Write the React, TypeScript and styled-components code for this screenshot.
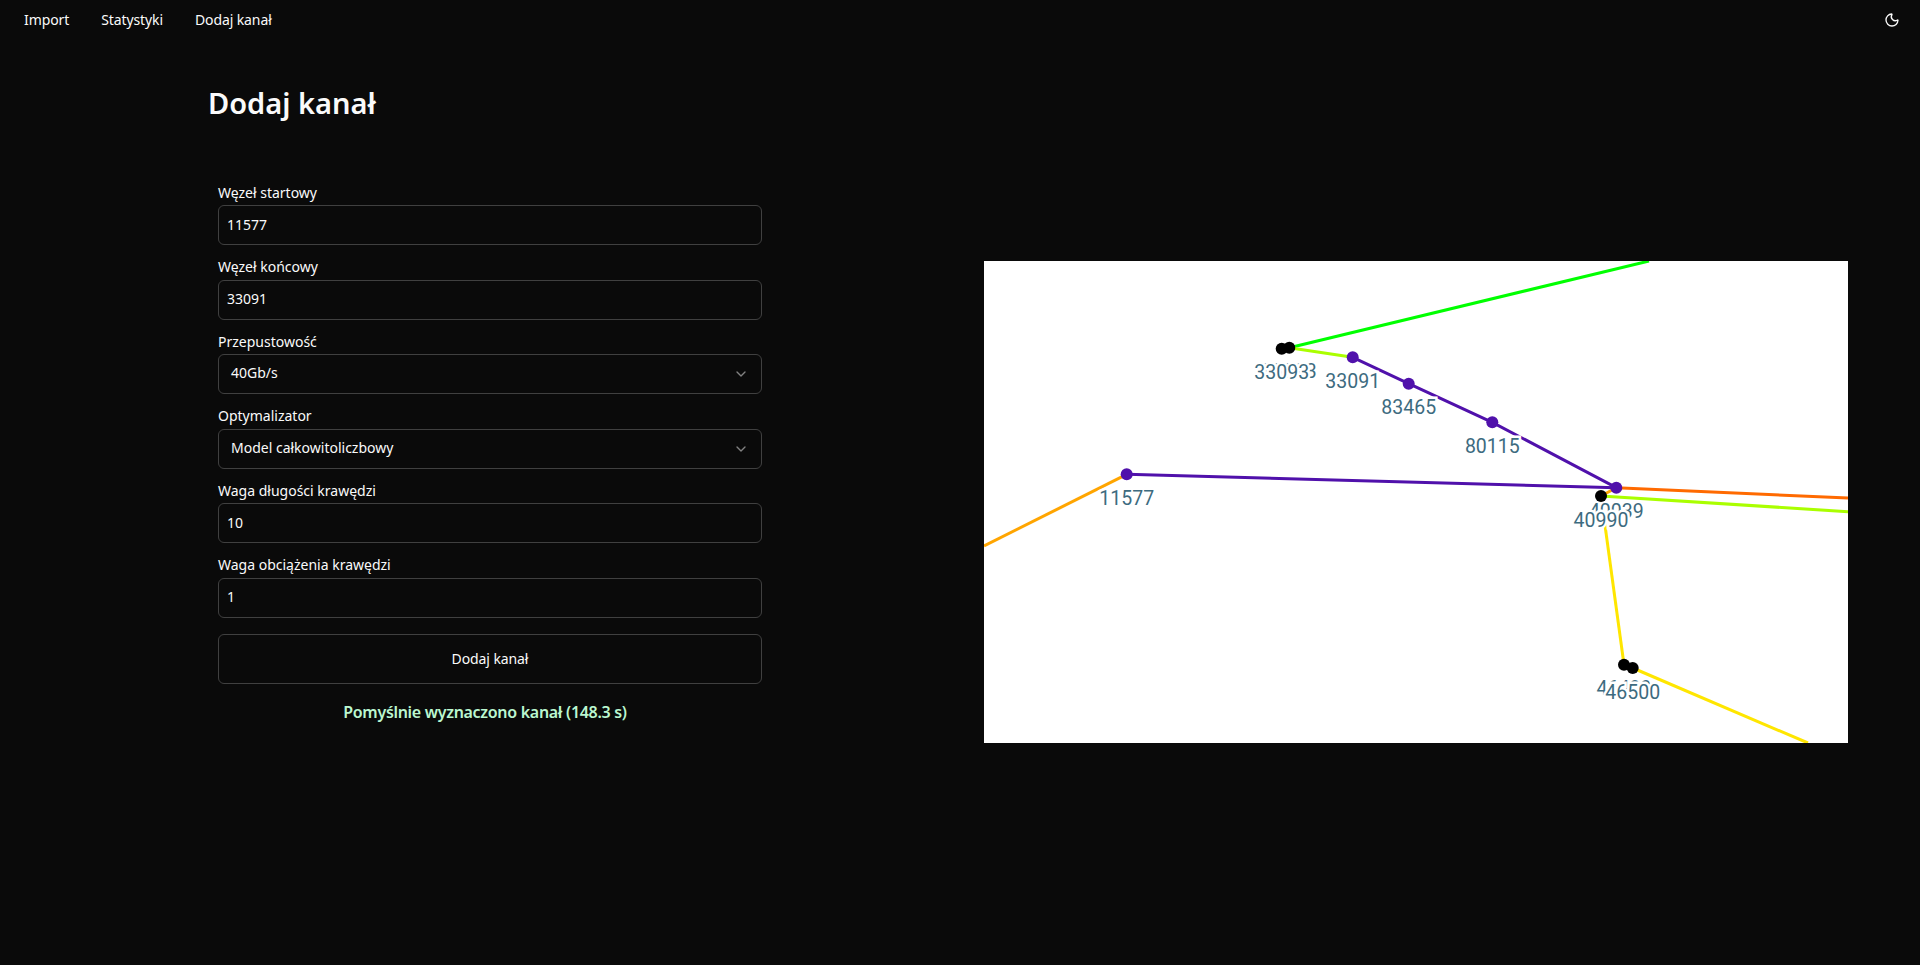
import React from 'react';
import styled, { createGlobalStyle } from 'styled-components';
import { ChevronDown, Moon } from 'lucide-react';

const GlobalStyle = createGlobalStyle`
  * {
    box-sizing: border-box;
  }

  html, body {
    margin: 0;
    min-height: 100%;
    background: #0a0a0a;
    color: #fafafa;
    font-family: "Noto Sans", "Liberation Sans", sans-serif;
  }
`;

type Point = [number, number];

const edges: { color: string; points: Point[] }[] = [
  { color: '#ffa500', points: [[0, 285], [142.7, 213.3]] },
  { color: '#00ff00', points: [[305.3, 86.7], [665, 0]] },
  { color: '#aaff00', points: [[305.3, 86.7], [368.7, 96.3]] },
  { color: '#ff6a00', points: [[632.3, 226.7], [864, 237]] },
  { color: '#aaff00', points: [[617, 235], [864, 250.7]] },
  { color: '#ffa500', points: [[617, 235], [632.3, 226.7]] },
  { color: '#ffe600', points: [[617, 235], [640, 403.7]] },
  { color: '#ffe600', points: [[648.7, 407], [824, 482]] },
  { color: '#5011ab', points: [[142.7, 213.3], [632.3, 226.7]] },
  { color: '#5011ab', points: [[368.7, 96.3], [424.7, 122.7], [508.3, 161.3], [632.3, 226.7]] },
];

const nodes: { id: string; x: number; y: number; active?: boolean }[] = [
  { id: '33093', x: 305.3, y: 86.7 },
  { id: '33093', x: 297.7, y: 87.7 },
  { id: '33091', x: 368.7, y: 96.3, active: true },
  { id: '83465', x: 424.7, y: 122.7, active: true },
  { id: '80115', x: 508.3, y: 161.3, active: true },
  { id: '11577', x: 142.7, y: 213.3, active: true },
  { id: '40039', x: 632.3, y: 226.7, active: true },
  { id: '40990', x: 617, y: 235 },
  { id: '46499', x: 640, y: 403.7 },
  { id: '46500', x: 648.7, y: 407 },
];

const Page = styled.div`
  min-height: 965px;
`;

const Nav = styled.nav`
  display: flex;
  align-items: center;
  justify-content: space-between;
  height: 40px;
  padding: 0 20px 0 24px;
`;

const NavLinks = styled.div`
  display: flex;
  gap: 32px;
`;

const NavLink = styled.a`
  font-size: 14px;
  line-height: 20px;
  letter-spacing: -0.1px;
  color: #fafafa;
`;

const ThemeToggle = styled.button`
  display: flex;
  padding: 0;
  border: 0;
  background: none;
  color: #fafafa;
`;

const Main = styled.main`
  padding: 43px 72px 0 208px;
`;

const Title = styled.h1`
  margin: 0 0 59.5px;
  font-size: 29px;
  line-height: 40px;
  font-weight: 600;
`;

const Columns = styled.div`
  display: flex;
  justify-content: space-between;
  padding-left: 10px;
`;

const Form = styled.form`
  display: flex;
  flex-direction: column;
  width: 544px;
`;

const Field = styled.div`
  display: flex;
  flex-direction: column;
  gap: 2.5px;
  margin-bottom: 12px;
`;

const Label = styled.label`
  font-size: 14px;
  line-height: 20px;
`;

const TextInput = styled.input`
  width: 100%;
  height: 40px;
  padding: 0 8px 2px;
  border: 1px solid #404040;
  border-radius: 6px;
  background: transparent;
  color: #fafafa;
  font: inherit;
  font-size: 14px;
`;

const SelectBox = styled.button`
  display: flex;
  align-items: center;
  justify-content: space-between;
  width: 100%;
  height: 40px;
  padding: 0 12px;
  border: 1px solid #404040;
  border-radius: 6px;
  background: transparent;
  color: #fafafa;
  font: inherit;
  font-size: 14px;
  line-height: 18px;

  svg {
    opacity: 0.5;
  }
`;

const SelectValue = styled.span`
  margin-top: -2px;
`;

const SubmitButton = styled.button`
  height: 50px;
  margin-top: 4.5px;
  padding-bottom: 2px;
  border: 1px solid #404040;
  border-radius: 6px;
  background: transparent;
  color: #fafafa;
  font: inherit;
  font-size: 14px;
  letter-spacing: -0.1px;
`;

const Message = styled.p`
  margin: 15.5px 10px 0 0;
  text-align: center;
  font-size: 16px;
  line-height: 24px;
  font-weight: 600;
  letter-spacing: -0.3px;
  color: #bbf7d0;
`;

const MapFrame = styled.svg`
  display: block;
  flex: none;
  width: 864px;
  height: 482px;
  margin-top: 78.5px;
  background: #fff;
`;

const NodeLabel = styled.text`
  font-family: Roboto, sans-serif;
  font-size: 19.5px;
  text-anchor: middle;
  fill: #3d6b80;
  stroke: #fff;
  stroke-width: 5px;
  paint-order: stroke;
`;

const inputField = (label: string, value: string) => (
  <Field>
    <Label>{label}</Label>
    <TextInput readOnly value={value} />
  </Field>
);

const selectField = (label: string, value: string) => (
  <Field>
    <Label>{label}</Label>
    <SelectBox type="button">
      <SelectValue>{value}</SelectValue>
      <ChevronDown size={16} />
    </SelectBox>
  </Field>
);

const ChannelMap = () => (
  <MapFrame viewBox="0 0 864 482">
    {edges.map((edge, i) => (
      <polyline
        key={i}
        points={edge.points.map((p) => p.join(',')).join(' ')}
        fill="none"
        stroke={edge.color}
        strokeWidth={3}
      />
    ))}
    {nodes.map((node, i) => (
      <g key={i}>
        <circle cx={node.x} cy={node.y} r={6} fill={node.active ? '#5011ab' : '#000'} />
        <NodeLabel x={node.x} y={node.y + 30.5}>{node.id}</NodeLabel>
      </g>
    ))}
  </MapFrame>
);

const App: React.FC = () => (
  <Page>
    <GlobalStyle />
    <Nav>
      <NavLinks>
        <NavLink>Import</NavLink>
        <NavLink>Statystyki</NavLink>
        <NavLink>Dodaj kanał</NavLink>
      </NavLinks>
      <ThemeToggle type="button" aria-label="Motyw">
        <Moon size={16} />
      </ThemeToggle>
    </Nav>
    <Main>
      <Title>Dodaj kanał</Title>
      <Columns>
        <Form>
          {inputField('Węzeł startowy', '11577')}
          {inputField('Węzeł końcowy', '33091')}
          {selectField('Przepustowość', '40Gb/s')}
          {selectField('Optymalizator', 'Model całkowitoliczbowy')}
          {inputField('Waga długości krawędzi', '10')}
          {inputField('Waga obciążenia krawędzi', '1')}
          <SubmitButton type="button">Dodaj kanał</SubmitButton>
          <Message>Pomyślnie wyznaczono kanał (148.3 s)</Message>
        </Form>
        <ChannelMap />
      </Columns>
    </Main>
  </Page>
);

export default App;
